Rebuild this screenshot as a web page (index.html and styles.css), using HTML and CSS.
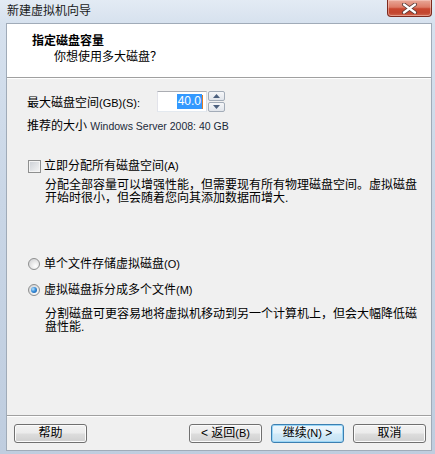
FILE: index.html
```html
<!DOCTYPE html>
<html lang="zh-CN">
<head>
<meta charset="utf-8">
<title>新建虚拟机向导</title>
<link rel="stylesheet" href="styles.css">
</head>
<body>
<div class="window">
  <div class="titlebar">
    <span class="title">新建虚拟机向导</span>
    <div class="close">
      <svg width="17" height="11" viewBox="0 0 17 11">
        <path d="M3 1.5 L14 9.5 M14 1.5 L3 9.5" stroke="#5a3a36" stroke-width="4" stroke-linecap="round"/>
        <path d="M3 1.5 L14 9.5 M14 1.5 L3 9.5" stroke="#ffffff" stroke-width="2.2" stroke-linecap="round"/>
      </svg>
    </div>
  </div>
  <div class="client">
    <div class="header">
      <div class="h-title">指定磁盘容量</div>
      <div class="h-sub">你想使用多大磁盘？</div>
    </div>
    <div class="body">
      <div class="size-row">
        <span class="size-label">最大磁盘空间<span class="lt">(GB)(S):</span></span>
        <div class="num"><span class="sel">40.0</span><span class="caret"></span></div>
        <div class="spin">
          <div class="spin-btn"><svg width="7" height="4" viewBox="0 0 7 4"><path d="M0 4 L3.5 0 L7 4 Z" fill="#4c607e"/></svg></div>
          <div class="spin-btn"><svg width="7" height="4" viewBox="0 0 7 4"><path d="M0 0 L3.5 4 L7 0 Z" fill="#4c607e"/></svg></div>
        </div>
      </div>
      <div class="recommend">推荐的大小 <span class="latin">Windows Server 2008: 40 GB</span></div>

      <div class="option check-row">
        <span class="checkbox"></span>
        <span>立即分配所有磁盘空间<span class="lt">(A)</span></span>
      </div>
      <div class="desc desc-1">分配全部容量可以增强性能，但需要现有所有物理磁盘空间。虚拟磁盘<br>开始时很小，但会随着您向其添加数据而增大.</div>

      <div class="option radio-row-1">
        <span class="radio"></span>
        <span>单个文件存储虚拟磁盘<span class="lt">(O)</span></span>
      </div>
      <div class="option radio-row-2">
        <span class="radio checked"></span>
        <span>虚拟磁盘拆分成多个文件<span class="lt">(M)</span></span>
      </div>
      <div class="desc desc-2">分割磁盘可更容易地将虚拟机移动到另一个计算机上，但会大幅降低磁<br>盘性能.</div>
    </div>
    <div class="footer">
      <button class="btn">帮助</button>
      <div class="nav">
        <button class="btn">&lt; 返回<span class="lt">(B)</span></button>
        <button class="btn default">继续<span class="lt">(N)</span> &gt;</button>
        <button class="btn">取消</button>
      </div>
    </div>
  </div>
</div>
</body>
</html>
```

FILE: styles.css
```css
* { box-sizing: border-box; }
html, body {
  margin: 0;
  padding: 0;
  width: 435px;
  height: 454px;
  overflow: hidden;
}
body {
  font-family: "Liberation Sans", "Noto Sans CJK SC", sans-serif;
  font-size: 12px;
  color: #000;
  background: #c9d7e8;
}
.window {
  display: flex;
  flex-direction: column;
  width: 435px;
  height: 454px;
  padding: 0 3px 3px 6px;
  background: linear-gradient(to bottom, #e3ebf4 0px, #d6e1ee 24px, #c9d6e6 200px, #bfcddf 454px);
}
.titlebar {
  height: 23px;
  display: flex;
  justify-content: space-between;
  align-items: flex-start;
}
.title {
  line-height: 23px;
  padding-left: 1px;
  color: #1a1a1a;
}
.close {
  width: 45px;
  height: 17px;
  border: 1px solid #7d2a1e;
  border-top: none;
  border-radius: 0 0 4px 4px;
  background: linear-gradient(to bottom, #e9a898 0%, #dd7b66 45%, #c9472f 55%, #c2452f 80%, #d0684f 100%);
  box-shadow: inset 0 0 0 1px rgba(255,220,210,0.45);
  display: flex;
  align-items: center;
  justify-content: center;
}
.client {
  flex: 1;
  display: flex;
  flex-direction: column;
  border: 1px solid #a0abb8;
  background: #f0f0f0;
}
.header {
  height: 54px;
  background: #fff;
  border-bottom: 1px solid #a0a0a0;
  box-shadow: 0 1px 0 #ffffff;
  padding: 9px 0 0 25px;
}
.h-title {
  font-weight: bold;
  line-height: 16px;
}
.h-sub {
  line-height: 16px;
  padding-left: 22px;
}
.body {
  flex: 1;
  padding-left: 20px;
  display: flex;
  flex-direction: column;
}
.lt {
  font-size: 11px;
}
.size-row {
  margin-top: 13px;
  height: 21px;
  display: flex;
  align-items: center;
}
.size-label {
  width: 130px;
}
.num {
  width: 50px;
  height: 21px;
  border: 1px solid;
  border-color: #abadb3 #dbdfe6 #e3e9ef #e2e3ea;
  background: #fff;
  display: flex;
  align-items: center;
  justify-content: flex-end;
  padding-right: 3px;
  line-height: 15px;
}
.sel {
  background: #3399ff;
  color: #fff;
  padding: 0 1px;
}
.caret {
  width: 1px;
  height: 14px;
  background: #e07b24;
}
.spin {
  width: 17px;
  height: 21px;
  margin-left: 1px;
  display: flex;
  flex-direction: column;
  gap: 1px;
}
.spin-btn {
  flex: 1;
  border: 1px solid #a3acb8;
  border-radius: 2px;
  background: linear-gradient(to bottom, #f6f7f9, #e1e5eb);
  display: flex;
  align-items: center;
  justify-content: center;
}
.recommend {
  margin-top: 7px;
  line-height: 14px;
}
.latin {
  font-size: 10.5px;
  color: #1b2a3a;
}
.option {
  display: flex;
  align-items: center;
  height: 14px;
  line-height: 14px;
}
.check-row { margin-top: 26px; gap: 3px; }
.radio-row-1 { margin-top: 52px; gap: 4px; }
.radio-row-2 { margin-top: 12px; gap: 4px; }
.checkbox {
  width: 13px;
  height: 13px;
  border: 1px solid #8e8f8f;
  background: linear-gradient(135deg, #cbcfd5, #f6f6f6);
  box-shadow: inset 0 0 0 1px #f4f4f4;
  margin-left: 1px;
}
.radio {
  width: 12px;
  height: 12px;
  border-radius: 50%;
  border: 1px solid #8e8f8f;
  background: radial-gradient(circle at 65% 70%, #ffffff 0%, #e6e6e6 50%, #c9cbcf 100%);
  display: flex;
  align-items: center;
  justify-content: center;
  margin-left: 1px;
}
.radio.checked::after {
  content: "";
  width: 6px;
  height: 6px;
  border-radius: 50%;
  background: radial-gradient(circle at 35% 35%, #b9e4ff 0%, #3b8fd9 45%, #0d4f9e 100%);
}
.desc {
  padding-left: 18px;
  line-height: 13px;
}
.desc-1 { margin-top: 6px; }
.desc-2 { margin-top: 11px; }
.footer {
  border-top: 1px solid #a0a0a0;
  box-shadow: inset 0 1px 0 #ffffff;
  padding: 8px 5px 7px 7px;
  display: flex;
  justify-content: space-between;
  align-items: center;
}
.nav {
  display: flex;
  gap: 9px;
}
.btn {
  width: 73px;
  height: 19px;
  margin: 0;
  padding: 0;
  border: 1px solid #707070;
  border-radius: 3px;
  background: linear-gradient(to bottom, #f2f2f2 0%, #ebebeb 48%, #dddddd 52%, #cfcfcf 100%);
  box-shadow: inset 0 0 0 1px #fbfbfb;
  font-family: "Liberation Sans", "Noto Sans CJK SC", sans-serif;
  font-size: 12px;
  line-height: 15px;
  color: #000;
}
.btn.default {
  border-color: #3c7fb1;
  box-shadow: inset 0 0 0 1px #9ad6f6;
  background: linear-gradient(to bottom, #eef7fd 0%, #e3f2fb 48%, #d2eaf8 52%, #c5e2f4 100%);
}
```
